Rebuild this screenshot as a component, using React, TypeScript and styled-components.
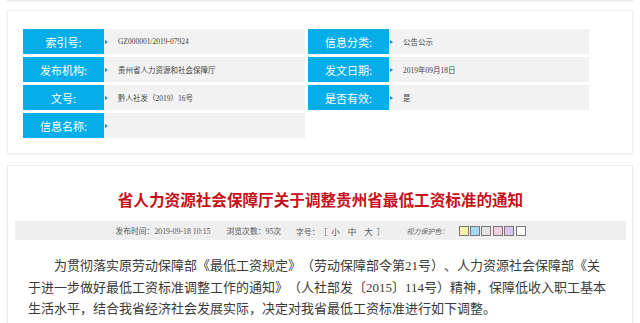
import React from 'react'
import styled, { createGlobalStyle } from 'styled-components'

const GlobalStyle = createGlobalStyle`
    html, body {
        margin: 0;
        padding: 0;
        background: #fff;
    }
    body {
        font-family: "Noto Sans CJK SC", "Liberation Sans", sans-serif;
        color: #333;
        text-spacing-trim: space-all;
    }
`

interface FieldData {
    label: string
    value: string
}

const leftFields: FieldData[] = [
    { label: '索引号:', value: 'GZ000001/2019-07924' },
    { label: '发布机构:', value: '贵州省人力资源和社会保障厅' },
    { label: '文号:', value: '黔人社发（2019）16号' },
    { label: '信息名称:', value: '' },
]

const rightFields: FieldData[] = [
    { label: '信息分类:', value: '公告公示' },
    { label: '发文日期:', value: '2019年09月18日' },
    { label: '是否有效:', value: '是' },
]

const swatches = ['#f7f3a8', '#a9d6f2', '#e3e3e3', '#f3cfe0', '#dcc6f0', '#ffffff']

const Field = ({ label, value }: FieldData) => (
    <FieldRow>
        <FieldLabel>{label}</FieldLabel>
        <FieldValue>{value}</FieldValue>
    </FieldRow>
)

export default function App() {
    return (
        <Page>
            <GlobalStyle />
            <PrevEdge />
            <InfoCard>
                <InfoGrid>
                    <Column>
                        {leftFields.map(f => <Field key={f.label} {...f} />)}
                    </Column>
                    <Column>
                        {rightFields.map(f => <Field key={f.label} {...f} />)}
                    </Column>
                </InfoGrid>
            </InfoCard>
            <ArticleCard>
                <Title>省人力资源社会保障厅关于调整贵州省最低工资标准的通知</Title>
                <MetaBar>
                    <MetaItem gap={16}>发布时间：2019-09-18 10:15</MetaItem>
                    <MetaItem gap={15}>浏览次数：95次</MetaItem>
                    <MetaItem gap={22}>
                        字号：［<SizeLink>小</SizeLink><SizeLink>中</SizeLink><SizeLink>大</SizeLink>］
                    </MetaItem>
                    <ProtectLabel>视力保护色：</ProtectLabel>
                    <Swatches>
                        {swatches.map(c => <Swatch key={c} color={c} />)}
                    </Swatches>
                </MetaBar>
                <Body>
                    为贯彻落实原劳动保障部《最低工资规定》（劳动保障部令第21号）、人力资源社会保障部《关于进一步做好最低工资标准调整工作的通知》（人社部发〔2015〕114号）精神，保障低收入职工基本生活水平，结合我省经济社会发展实际，决定对我省最低工资标准进行如下调整。
                </Body>
            </ArticleCard>
        </Page>
    )
}

const Page = styled.div`
    width: 640px;
    height: 323px;
    overflow: hidden;
    padding: 0 7px;
    box-sizing: border-box;
`

const PrevEdge = styled.div`
    height: 1px;
    background: #ececec;
    box-shadow: 0 1px 1px rgba(0, 0, 0, 0.04);
`

const InfoCard = styled.div`
    margin-top: 9px;
    height: 144px;
    box-sizing: border-box;
    padding: 18px 15px 0;
    border: 1px solid #f0f0f0;
    box-shadow: 0 1px 2px rgba(0, 0, 0, 0.06);
`

const InfoGrid = styled.div`
    display: grid;
    grid-template-columns: 282px 281px;
    column-gap: 3px;
`

const Column = styled.div`
    display: flex;
    flex-direction: column;
    gap: 3px;
`

const FieldRow = styled.div`
    display: flex;
    height: 25px;
`

const FieldLabel = styled.div`
    position: relative;
    flex: 0 0 81px;
    background: #06aee9;
    color: #fff;
    font-size: 11px;
    display: flex;
    align-items: center;
    justify-content: center;

    &::after {
        content: '';
        position: absolute;
        right: -4px;
        top: 50%;
        margin-top: -2px;
        border-left: 3px solid #2a8fc0;
        border-top: 2px solid transparent;
        border-bottom: 2px solid transparent;
    }
`

const FieldValue = styled.div`
    flex: 1;
    background: #f2f2f2;
    color: #444;
    font-family: "Liberation Serif", "Noto Sans CJK SC", serif;
    font-size: 7.5px;
    display: flex;
    align-items: center;
    padding-left: 14px;
`

const ArticleCard = styled.div`
    margin-top: 11px;
    height: 170px;
    box-sizing: border-box;
    border: 1px solid #ececec;
    box-shadow: 0 1px 2px rgba(0, 0, 0, 0.06);
    padding: 24px 6px 0 7px;
`

const Title = styled.h1`
    margin: 0;
    text-align: center;
    color: #c8101a;
    font-size: 15.6px;
    font-weight: 700;
    line-height: 18px;
`

const MetaBar = styled.div`
    margin-top: 13px;
    height: 19px;
    background: #efefef;
    display: flex;
    align-items: center;
    justify-content: center;
    font-family: "Liberation Serif", "Noto Sans CJK SC", serif;
    font-size: 7.8px;
    color: #555;
`

const MetaItem = styled.span<{ gap: number }>`
    margin-right: ${p => p.gap}px;
`

const SizeLink = styled.span`
    font-size: 8.5px;
    margin: 0 4px;
`

const ProtectLabel = styled.span`
    font-style: italic;
    font-size: 7px;
    color: #666;
    margin-right: 10px;
`

const Swatches = styled.div`
    display: flex;
    gap: 1.4px;
`

const Swatch = styled.span<{ color: string }>`
    width: 8px;
    height: 8px;
    border: 1px solid #777;
    background: ${p => p.color};
`

const Body = styled.p`
    margin: 15px 0 0;
    padding: 0 16px 0 13px;
    text-indent: 2em;
    font-family: "Liberation Serif", "Noto Sans CJK SC", serif;
    font-size: 13px;
    line-height: 21.5px;
    color: #3a3a3a;
    width: 582px;
    box-sizing: content-box;
`
